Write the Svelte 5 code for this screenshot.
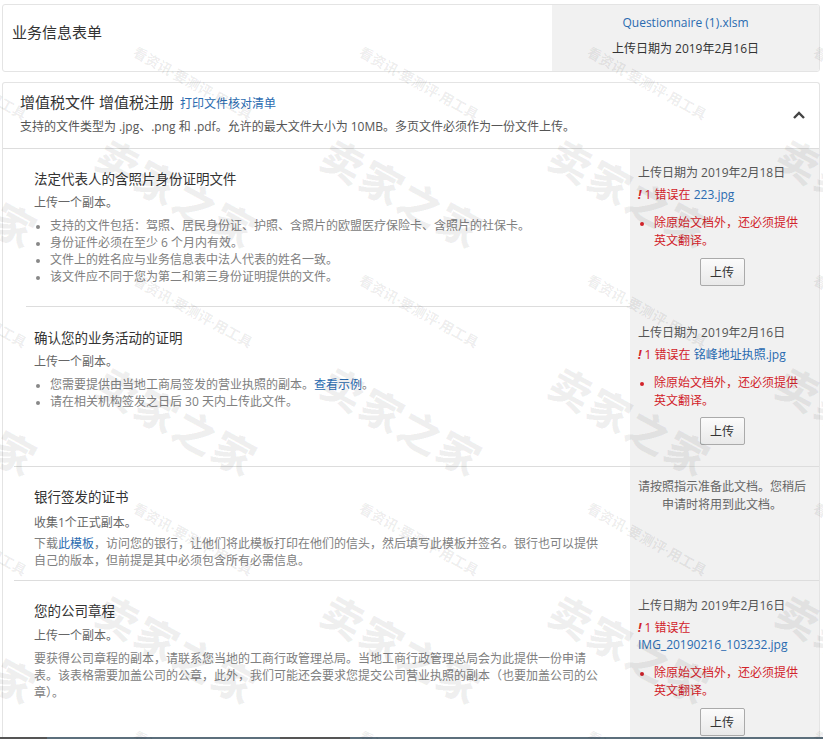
<script>
  const big = [];
  const small = [];
  for (const y of [133, 361, 589]) for (const x of [-110, 110, 335, 563, 790]) big.push({ x, y });
  for (const y of [44, 272, 500, 728]) for (const x of [-88, 138, 364, 592, 818]) small.push({ x, y });

  const docs = [
    {
      kind: 'a', h: 158, sep: 'short', title: '法定代表人的含照片身份证明文件', sub: '上传一个副本。',
      list: ['支持的文件包括：驾照、居民身份证、护照、含照片的欧盟医疗保险卡、含照片的社保卡。', '身份证件必须在至少 6 个月内有效。', '文件上的姓名应与业务信息表中法人代表的姓名一致。', '该文件应不同于您为第二和第三身份证明提供的文件。'],
      date: '上传日期为 2019年2月18日', file: '223.jpg'
    },
    {
      kind: 'b', h: 160, sep: 'long', title: '确认您的业务活动的证明', sub: '上传一个副本。',
      date: '上传日期为 2019年2月16日', file: '铭峰地址执照.jpg'
    },
    { kind: 'c', h: 114, sep: 'long', title: '银行签发的证书', sub: '收集1个正式副本。' },
    {
      kind: 'd', h: 157, sep: '', title: '您的公司章程', sub: '上传一个副本。',
      para: '要获得公司章程的副本，请联系您当地的工商行政管理总局。当地工商行政管理总局会为此提供一份申请表。该表格需要加盖公司的公章，此外，我们可能还会要求您提交公司营业执照的副本（也要加盖公司的公章）。',
      date: '上传日期为 2019年2月16日', file: 'IMG_20190216_103232.jpg'
    }
  ];
</script>

<div class="page">
  <section class="top-card">
    <h1>业务信息表单</h1>
    <div class="top-side">
      <a href="#q">Questionnaire (1).xlsm</a>
      <p>上传日期为 2019年2月16日</p>
    </div>
  </section>

  <section class="vat-card">
    <header class="vat-head">
      <div>
        <div class="vat-title"><strong>增值税文件 增值税注册</strong><a href="#p">打印文件核对清单</a></div>
        <p class="vat-note">支持的文件类型为 .jpg、.png 和 .pdf。允许的最大文件大小为 10MB。多页文件必须作为一份文件上传。</p>
      </div>
      <svg class="chev" viewBox="0 0 12 8" width="12" height="8" aria-hidden="true"><path d="M1 7 L6 2 L11 7" fill="none" stroke="#444" stroke-width="2.4" /></svg>
    </header>

    {#each docs as d}
      <div class="row kind-{d.kind}" style="height:{d.h}px">
        <div class="main">
          <h3>{d.title}</h3>
          <p class="sub">{d.sub}</p>
          {#if d.list}
            <ul>{#each d.list as li}<li>{li}</li>{/each}</ul>
          {:else if d.kind === 'b'}
            <ul>
              <li>您需要提供由当地工商局签发的营业执照的副本。<a href="#s">查看示例</a>。</li>
              <li>请在相关机构签发之日后 30 天内上传此文件。</li>
            </ul>
          {:else if d.kind === 'c'}
            <p class="para">下载<a href="#t">此模板</a>，访问您的银行，让他们将此模板打印在他们的信头，然后填写此模板并签名。银行也可以提供自己的版本，但前提是其中必须包含所有必需信息。</p>
          {:else}
            <p class="para">{d.para}</p>
          {/if}
        </div>
        <aside class="side">
          {#if d.kind === 'c'}
            <p class="hint">请按照指示准备此文档。您稍后申请时将用到此文档。</p>
          {:else}
            <p class="date">{d.date}</p>
            <p class="err"><i>!</i> 1 错误在 <a href="#f">{d.file}</a></p>
            <ul class="errs"><li>除原始文档外，还必须提供英文翻译。</li></ul>
            <button type="button">上传</button>
          {/if}
        </aside>
        {#if d.sep}<div class="sep {d.sep}"></div>{/if}
      </div>
    {/each}
  </section>

  <div class="strip"></div>

  <div class="marks" aria-hidden="true">
    {#each big as m}<span class="big" style="left:{m.x}px;top:{m.y}px">卖家之家</span>{/each}
    {#each small as m}<span class="small" style="left:{m.x}px;top:{m.y}px">看资讯·要测评·用工具</span>{/each}
  </div>
</div>

<style>
  :global(body) { margin: 0; background: #fff; }
  .page {
    position: relative; width: 823px; height: 739px; overflow: hidden; box-sizing: border-box; padding: 4px 3px 0 2px;
    font: 12px/17px "Open Sans", "Noto Sans CJK SC", sans-serif; color: #666; background: #fff;
  }
  a { color: #2a6bb0; text-decoration: none; }
  p, h1, h3, ul { margin: 0; padding: 0; }
  .top-card {
    display: flex; height: 68px; box-sizing: border-box; border: 1px solid #e4e4e4; border-radius: 3px; overflow: hidden;
  }
  h1 { flex: 1; font-size: 15px; font-weight: 400; color: #333; padding: 18px 0 0 9px; line-height: 18px; }
  .top-side {
    width: 267px; background: #f1f1f1; text-align: center; padding-top: 9px; box-sizing: border-box; color: #333;
  }
  .top-side p { margin-top: 9px; }
  .vat-card {
    margin-top: 10px; border: 1px solid #e4e4e4; border-bottom: 0; border-radius: 3px 3px 0 0; height: 660px; box-sizing: border-box;
  }
  .vat-head {
    height: 66px; box-sizing: border-box; padding: 10px 14px 0 17px; display: flex; justify-content: space-between; align-items: flex-start;
    border-bottom: 1px solid #ddd;
  }
  .vat-title { display: flex; align-items: baseline; gap: 6px; }
  .vat-title strong { font-size: 15px; font-weight: 400; color: #333; line-height: 18px; }
  .vat-note { margin-top: 6px; color: #555; }
  .chev { margin-top: 18px; }
  .row { position: relative; display: flex; }
  .main { flex: 1; padding: 21px 0 0 31px; min-width: 0; }
  h3 { font-size: 13.5px; font-weight: 400; color: #333; line-height: 19px; }
  .sub { margin-top: 5px; color: #666; }
  .main ul { margin-top: 6px; padding-left: 16px; list-style: disc; color: #808080; }
  .main li::marker { color: #888; font-size: 10px; }
  .para { margin-top: 7px; width: 572px; color: #808080; }
  .kind-b .main { padding-top: 22px; }
  .kind-c .sub { margin-top: 7px; }
  .kind-d .sub { margin-top: 6px; }
  .kind-c .para { margin-top: 4px; }
  .kind-d .para { margin-top: 6px; }
  .side { width: 189px; background: #f1f1f1; box-sizing: border-box; padding: 15px 13px 0 8px; flex: none; }
  .kind-b .side { padding-top: 17px; }
  .kind-c .side { padding-top: 11px; }
  .kind-d .side { padding-top: 16px; }
  .kind-a button { margin-top: 8px; }
  .kind-d button { margin-top: 8px; }
  .date { color: #555; }
  .err { margin-top: 5px; color: #d2232a; }
  .err i { font-weight: 700; font-style: italic; }
  .errs { margin-top: 11px; padding-left: 16px; color: #d2232a; line-height: 18px; }
  .errs li::marker { font-size: 10px; }
  button {
    display: block; margin: 7px auto 0; width: 45px; height: 28px; padding: 0; font: inherit; color: #333;
    border: 1px solid #aaa; border-radius: 2px; background: linear-gradient(#fbfbfb, #e9e9e9);
  }
  .hint { text-align: center; line-height: 18px; }
  .sep { position: absolute; bottom: 0; right: 0; height: 1px; background: #ddd; }
  .sep.short { left: 23px; right: 189px; }
  .sep.long { left: 11px; }
  .strip {
    position: absolute; left: 0; right: 0; bottom: 0; height: 2px;
    background: linear-gradient(90deg, #555 47px, #5c6f7c 47px, #5c6f7c 280px, #555 280px, #555 350px, #5c6f7c 350px);
  }
  .marks { position: absolute; inset: 0; pointer-events: none; overflow: hidden; }
  .marks span { position: absolute; white-space: nowrap; transform-origin: 0 0; transform: rotate(29deg); }
  .big { font-size: 42px; font-weight: 900; line-height: 42px; letter-spacing: 2px; color: rgba(0, 0, 0, 0.06); }
  .small { font-size: 14px; font-weight: 700; line-height: 16px; color: rgba(0, 0, 0, 0.08); }
</style>
